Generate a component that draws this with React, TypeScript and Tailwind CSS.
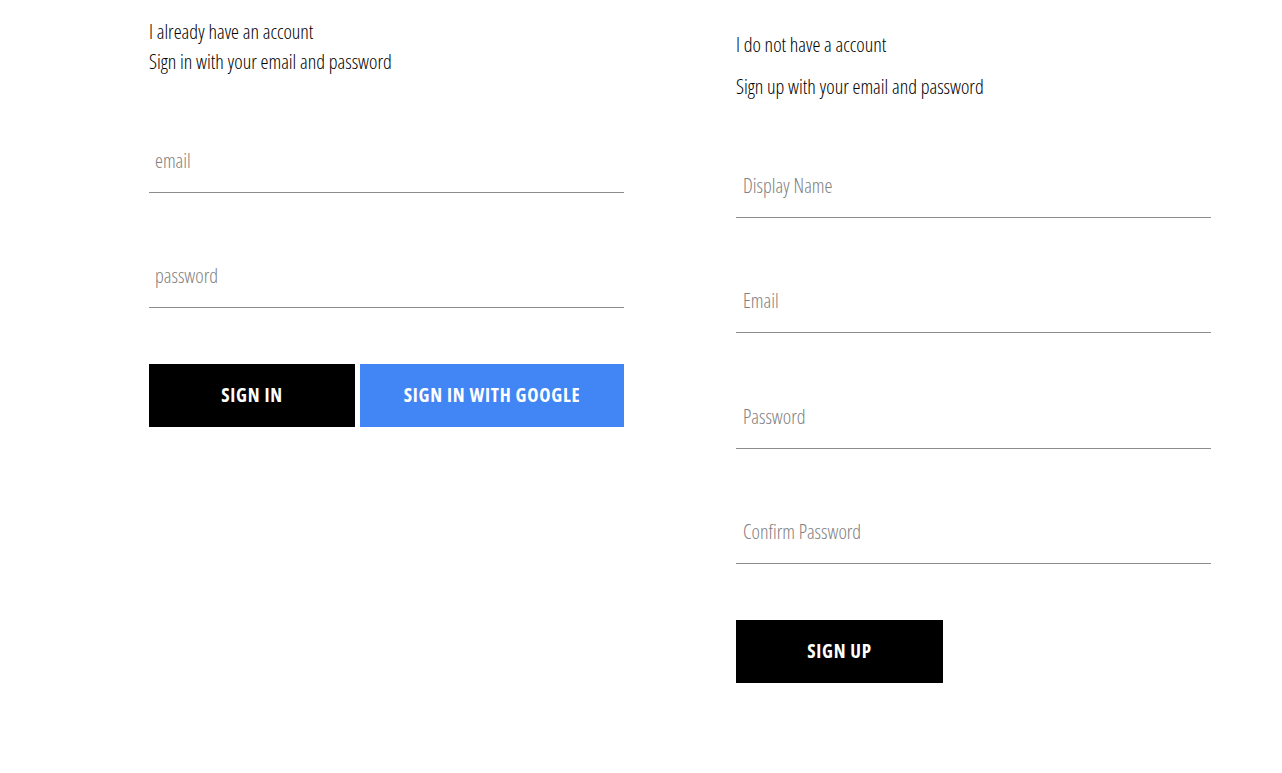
import React from "react";

const font = { fontFamily: '"Open Sans", "Liberation Sans", sans-serif' };

function Field({ label, tall, left }: { label: string; tall?: boolean; left?: boolean }) {
  return (
    <div
      className={`flex flex-col justify-end border-b border-[#8c8c8c] ${tall ? "h-[116px]" : "h-[115px]"}`}
    >
      <div
        className={`pb-[16px] text-[20px] leading-[30px] font-light text-[#808080] ${left ? "pl-[6px]" : "pl-[7px]"}`}
      >
        {label}
      </div>
    </div>
  );
}

export default function App() {
  return (
    <div
      className="flex min-h-[773px] gap-[112px] bg-white pl-[149px] font-stretch-condensed"
      style={font}
    >
      <div className="w-[475px] pt-[17px]">
        <div className="text-[20px] leading-[30px] font-light text-black">I already have an account</div>
        <div className="text-[20px] leading-[30px] font-light text-black">Sign in with your email and password</div>
        <Field label="email" tall left />
        <Field label="password" left />
        <div className="mt-[56px] flex gap-[5px]">
          <button className="flex h-[63px] w-[206px] items-center justify-center bg-black text-[19px] font-bold tracking-[0.75px] text-white uppercase">
            Sign in
          </button>
          <button className="flex h-[63px] w-[264px] items-center justify-center bg-[#4285f4] text-[19px] font-bold tracking-[0.75px] text-white uppercase">
            Sign in with Google
          </button>
        </div>
      </div>
      <div className="w-[475px] pt-[30px]">
        <div className="text-[20px] leading-[30px] font-light text-black">I do not have a account</div>
        <div className="mt-[12px] text-[20px] leading-[30px] font-light text-black">Sign up with your email and password</div>
        <Field label="Display Name" tall />
        <Field label="Email" />
        <Field label="Password" tall />
        <Field label="Confirm Password" />
        <div className="mt-[56px]">
          <button className="flex h-[63px] w-[207px] items-center justify-center bg-black text-[19px] font-bold tracking-[0.75px] text-white uppercase">
            Sign up
          </button>
        </div>
      </div>
    </div>
  );
}
